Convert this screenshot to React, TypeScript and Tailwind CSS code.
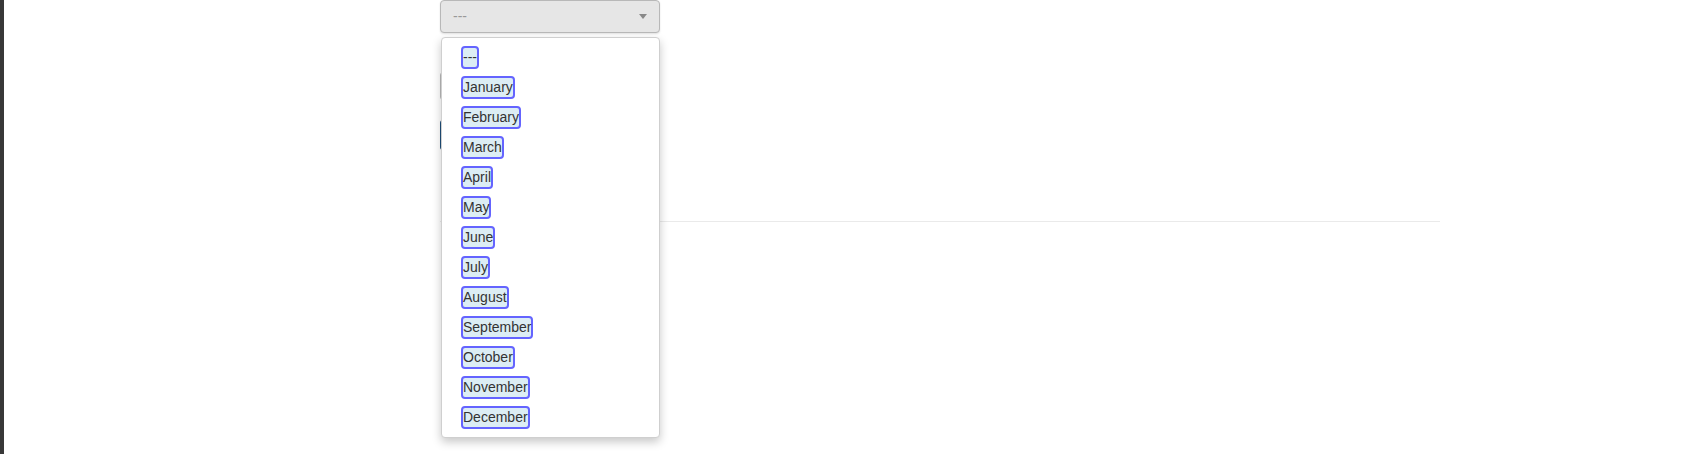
import React from "react";

const months = [
  "---",
  "January",
  "February",
  "March",
  "April",
  "May",
  "June",
  "July",
  "August",
  "September",
  "October",
  "November",
  "December",
];

export default function App() {
  return (
    <div
      className="flex h-[454px] w-[1703px] overflow-hidden bg-white text-[14px] text-[#333]"
      style={{ fontFamily: '"Liberation Sans", Arial, sans-serif' }}
    >
      <div className="w-[4px] shrink-0 bg-[#383838]" />
      <div className="shrink-0 pl-[436px]">
        <div className="relative w-[1000px]">
          {/* select control */}
          <div className="flex h-[33px] w-[220px] items-center justify-between rounded-[4px] border border-[#b8b8b8] bg-[#e6e6e6] pl-[12px] pr-[12px] shadow-[0_1px_2px_rgba(0,0,0,0.12)]">
            <span className="text-[#999]">---</span>
            <span className="h-0 w-0 border-x-[4px] border-t-[5px] border-x-transparent border-t-[#888]" />
          </div>

          {/* content behind the menu */}
          <div className="mt-[39px] h-[28px] w-[220px] rounded-[3px] border border-[#bbb] bg-white" />
          <div className="mt-[20px] h-[30px] w-[90px] rounded-[3px] bg-[#1f4e79]" />
          <div className="mt-[71px] h-px w-[1000px] bg-[#eaeaea]" />

          {/* open menu */}
          <div className="absolute left-[1px] top-[37px] flex h-[401px] w-[219px] flex-col items-start gap-[7px] rounded-[4px] border border-[#cfcfcf] bg-white pl-[19px] pt-[8px] shadow-[0_4px_10px_rgba(0,0,0,0.22)]">
            {months.map((m) => (
              <span
                key={m}
                className="inline-flex h-[23px] items-center rounded-[4px] border-2 border-[#6464ff] bg-[#dcedf4] leading-[19px] text-[#333]"
              >
                {m}
              </span>
            ))}
          </div>
        </div>
      </div>
    </div>
  );
}
